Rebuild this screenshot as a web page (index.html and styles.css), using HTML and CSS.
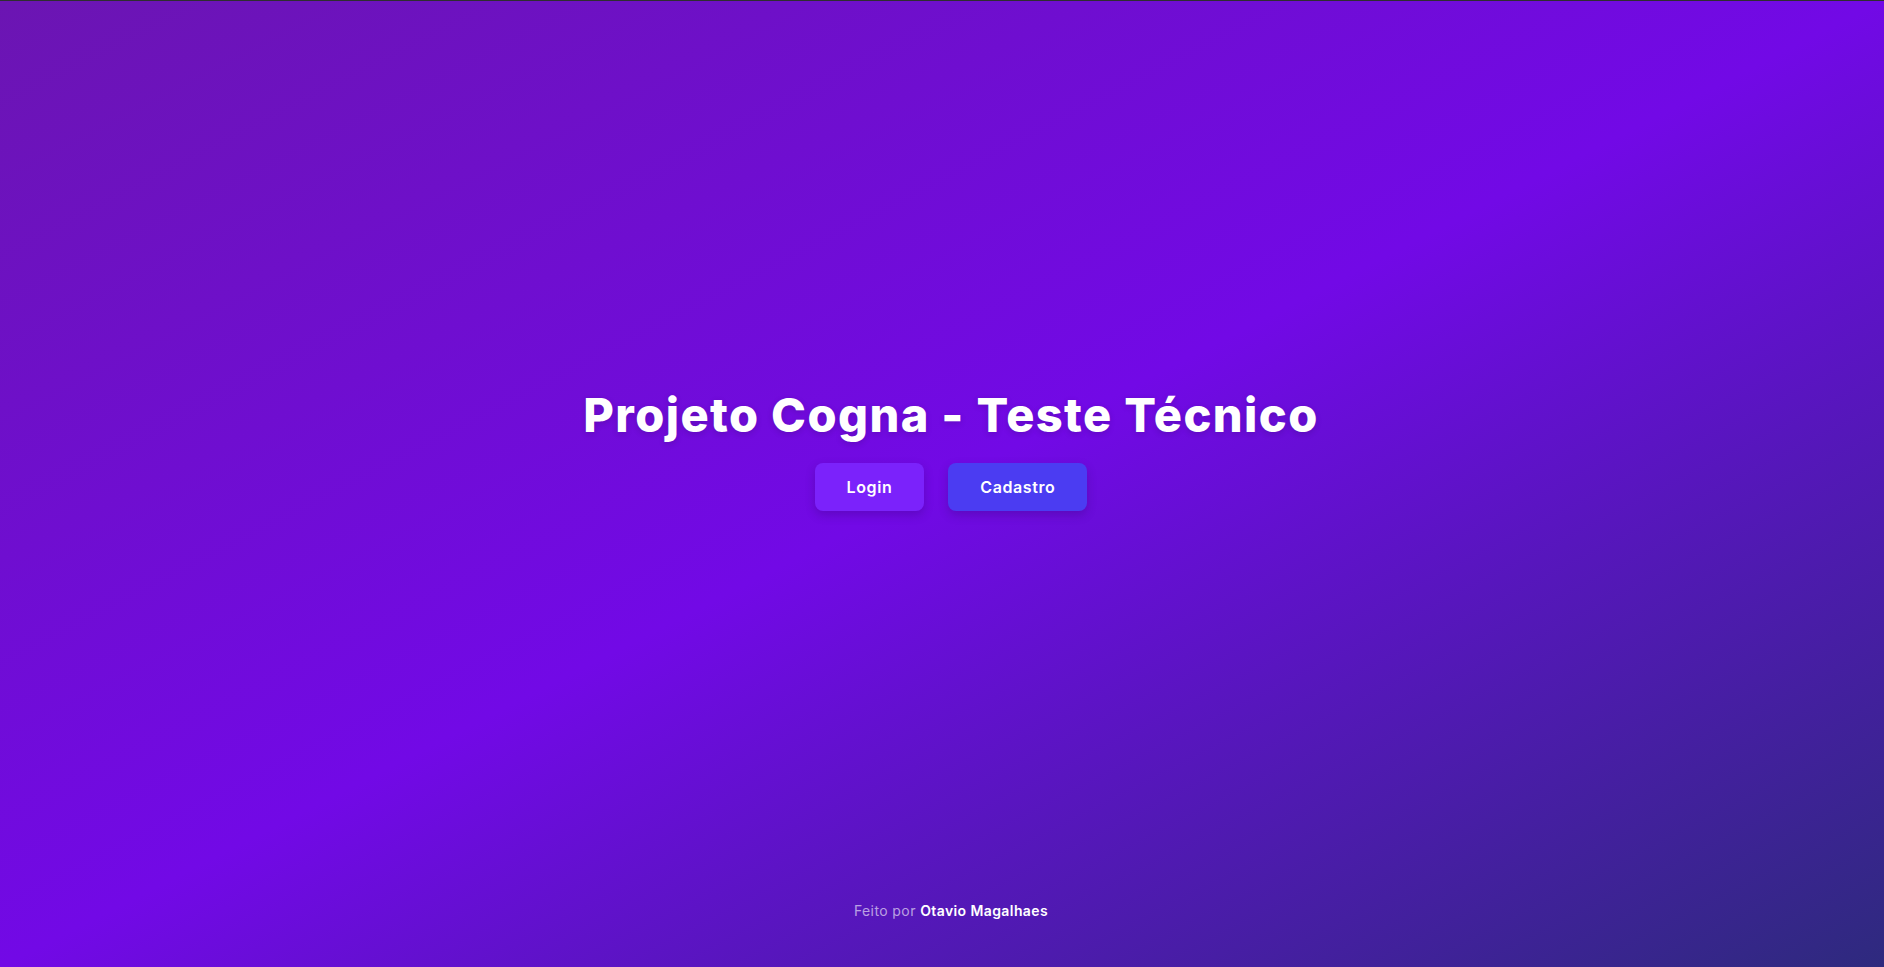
FILE: index.html
```html
<!DOCTYPE html>
<html lang="pt-BR">
<head>
<meta charset="utf-8">
<title>Projeto Cogna - Teste Técnico</title>
<link rel="stylesheet" href="styles.css">
</head>
<body>
  <main class="hero">
    <h1 class="hero-title">Projeto Cogna - Teste Técnico</h1>
    <div class="hero-actions">
      <a class="btn btn-login" href="#">Login</a>
      <a class="btn btn-signup" href="#">Cadastro</a>
    </div>
  </main>
  <footer class="footer">
    <span class="footer-muted">Feito por</span> <strong class="footer-name">Otavio Magalhaes</strong>
  </footer>
</body>
</html>
```

FILE: styles.css
```css
* { box-sizing: border-box; }
html, body { height: 100%; }
body {
  margin: 0;
  min-height: 100vh;
  display: flex;
  flex-direction: column;
  padding-left: 18px;
  border-top: 1px solid #2e2e30;
  background: linear-gradient(to bottom right, #6b15b2 0%, #7209e6 50%, #2e2a7e 100%);
  font-family: Inter, "Noto Sans", sans-serif;
  color: #fff;
}
.hero {
  flex: 1;
  display: flex;
  flex-direction: column;
  align-items: center;
  justify-content: center;
  padding-bottom: 4px;
}
.hero-title {
  margin: 0 0 20px;
  font-size: 47px;
  line-height: 1.2;
  font-weight: 800;
  letter-spacing: 1.4px;
  text-shadow: 0 2px 6px rgba(0,0,0,0.15);
}
.hero-actions {
  display: flex;
  gap: 24px;
}
.btn {
  display: inline-block;
  height: 48px;
  line-height: 48px;
  padding: 0 32px;
  border-radius: 8px;
  color: #fff;
  text-decoration: none;
  font-size: 16px;
  font-weight: 600;
  letter-spacing: 0.6px;
  box-shadow: 0 4px 10px rgba(40, 0, 90, 0.25);
}
.btn-login { background: #7b22fb; }
.btn-signup { background: #4b3cf2; }
.footer {
  padding: 0 0 46px;
  text-align: center;
  font-size: 14px;
  line-height: 20px;
  letter-spacing: 0.4px;
}
.footer-muted { color: rgba(255,255,255,0.6); }
.footer-name { font-weight: 600; color: #fff; }
```
